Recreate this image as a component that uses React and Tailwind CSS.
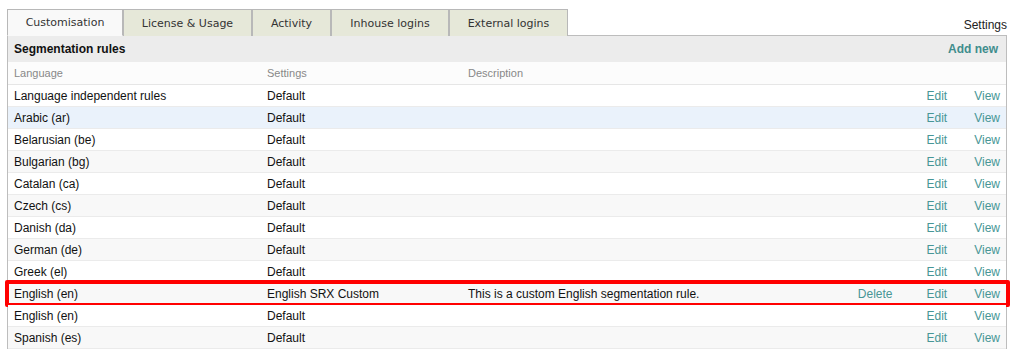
import React from "react";

const tabs = [
  { label: "Customisation", w: "w-[116px]", active: true },
  { label: "License & Usage", w: "w-[129px]" },
  { label: "Activity", w: "w-[79px]" },
  { label: "Inhouse logins", w: "w-[118px]" },
  { label: "External logins", w: "w-[119px]" },
];

const rules = [
  { lang: "Language independent rules", settings: "Default" },
  { lang: "Arabic (ar)", settings: "Default", hover: true },
  { lang: "Belarusian (be)", settings: "Default" },
  { lang: "Bulgarian (bg)", settings: "Default" },
  { lang: "Catalan (ca)", settings: "Default" },
  { lang: "Czech (cs)", settings: "Default" },
  { lang: "Danish (da)", settings: "Default" },
  { lang: "German (de)", settings: "Default" },
  { lang: "Greek (el)", settings: "Default" },
  {
    lang: "English (en)",
    settings: "English SRX Custom",
    description: "This is a custom English segmentation rule.",
    custom: true,
  },
  { lang: "English (en)", settings: "Default" },
  { lang: "Spanish (es)", settings: "Default" },
];

const RuleRow = ({ rule, index }) => {
  const bg = rule.hover
    ? "bg-[#eaf2fb]"
    : index % 2 === 1
      ? "bg-[#f8f8f8]"
      : "bg-white";

  return (
    <div
      className={`relative flex items-center h-[22px] border-b border-[#ebebeb] ${bg}`}
    >
      <div className="w-[259px] pl-[6px] text-[#111]">{rule.lang}</div>
      <div className="w-[201px] text-[#111]">{rule.settings}</div>
      <div className="flex-1 text-[#111]">{rule.description}</div>
      <div className="flex items-center text-[#479696] pr-[6px]">
        {rule.custom && <span className="mr-[34px]">Delete</span>}
        <span className="mr-[27px]">Edit</span>
        <span>View</span>
      </div>

      {/* annotation highlight */}
      {rule.custom && (
        <div className="absolute left-[-3px] right-[-4px] top-[-3px] bottom-[-3px] border-[4px] border-[#ff0000] rounded-[2px] pointer-events-none" />
      )}
    </div>
  );
};

export default function App() {
  return (
    <div className="w-[1017px] h-[352px] overflow-hidden bg-white pl-[7px] pr-[10px] pt-[9px] font-['Liberation_Sans',Arial,sans-serif] text-[12px]">
      {/* Tabs */}
      <div className="flex items-end justify-between">
        <div className="flex">
          {tabs.map((tab) => (
            <div
              key={tab.label}
              className={`${tab.w} h-[27px] flex items-center justify-center pt-[2px] border border-[#b8b8b8] font-['DejaVu_Sans',Verdana,sans-serif] text-[11px] text-[#333] ${
                tab.active
                  ? "bg-[#f9f9f9] border-b-[#f9f9f9] relative z-10"
                  : "bg-[#e6e8d9] border-b-0 h-[26px]"
              }`}
            >
              {tab.label}
            </div>
          ))}
        </div>
        <div className="text-[#222] pb-[2px]">Settings</div>
      </div>

      {/* Panel */}
      <div className="border border-[#bdbdbd] border-b-0 -mt-px">
        <div className="flex items-center justify-between h-[26px] bg-[#ececec] px-[6px]">
          <span className="font-bold text-[#111]">Segmentation rules</span>
          <span className="font-bold text-[#3f8d8d] pr-[2px]">Add new</span>
        </div>

        <div className="flex items-center h-[23px] bg-[#fcfcfc] border-b border-[#e6e6e6] text-[11px] text-[#888]">
          <div className="w-[259px] pl-[6px]">Language</div>
          <div className="w-[201px]">Settings</div>
          <div className="flex-1">Description</div>
        </div>

        {rules.map((rule, i) => (
          <RuleRow key={i} rule={rule} index={i} />
        ))}
      </div>
    </div>
  );
}
